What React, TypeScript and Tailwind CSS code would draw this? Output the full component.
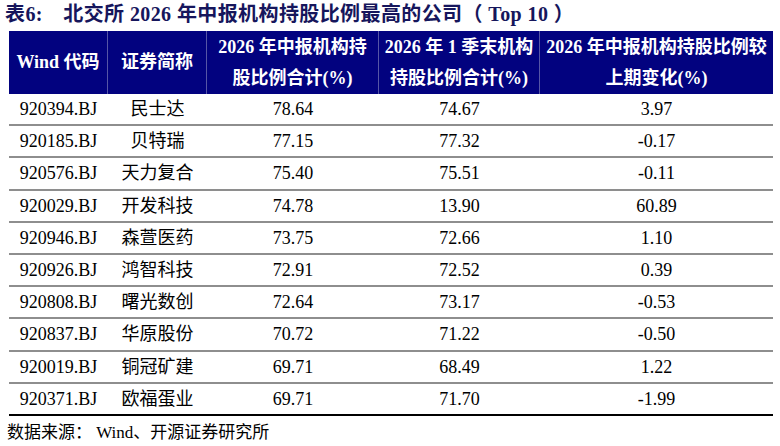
import React from "react";

const rows = [
  ["920394.BJ", "民士达", "78.64", "74.67", "3.97"],
  ["920185.BJ", "贝特瑞", "77.15", "77.32", "-0.17"],
  ["920576.BJ", "天力复合", "75.40", "75.51", "-0.11"],
  ["920029.BJ", "开发科技", "74.78", "13.90", "60.89"],
  ["920946.BJ", "森萱医药", "73.75", "72.66", "1.10"],
  ["920926.BJ", "鸿智科技", "72.91", "72.52", "0.39"],
  ["920808.BJ", "曙光数创", "72.64", "73.17", "-0.53"],
  ["920837.BJ", "华原股份", "70.72", "71.22", "-0.50"],
  ["920019.BJ", "铜冠矿建", "69.71", "68.49", "1.22"],
  ["920371.BJ", "欧福蛋业", "69.71", "71.70", "-1.99"],
];

const widths = ["w-[99px]", "w-[99px]", "w-[172px]", "w-[161px]", "w-[233px]"];

export default function App() {
  return (
    <div
      className="w-[780px] h-[446px] bg-white overflow-hidden text-black"
      style={{ fontFamily: '"Liberation Serif", "Noto Sans CJK SC", serif' }}
    >
      <div className="h-[31px] pl-[5px] text-[20px] font-bold leading-[28px] tracking-[0.4px] text-[#16165c] whitespace-nowrap">
        表6:{"\u3000"}北交所 2026 年中报机构持股比例最高的公司（ Top 10 ）
      </div>
      <div className="ml-[9px] w-[764px]">
        <div className="flex h-[63px] bg-[#02027f] text-white font-bold text-[18px]">
          <div className={`${widths[0]} flex items-center justify-center border-r border-[#5656a6]`}>
            Wind 代码
          </div>
          <div className={`${widths[1]} flex items-center justify-center border-r border-[#5656a6]`}>
            证券简称
          </div>
          <div className={`${widths[2]} flex flex-col items-center justify-center leading-[31px] border-r border-[#5656a6]`}>
            <div>2026 年中报机构持</div>
            <div>股比例合计(%)</div>
          </div>
          <div className={`${widths[3]} flex flex-col items-center justify-center leading-[31px] border-r border-[#5656a6]`}>
            <div>2026 年 1 季末机构</div>
            <div>持股比例合计(%)</div>
          </div>
          <div className={`${widths[4]} flex flex-col items-center justify-center leading-[31px]`}>
            <div>2026 年中报机构持股比例较</div>
            <div>上期变化(%)</div>
          </div>
        </div>
        {rows.map((r, i) => (
          <div
            key={r[0]}
            className={`flex h-[32.2px] text-[18px] items-center ${
              i === rows.length - 1 ? "border-b-2 border-black" : "border-b-2 border-[#8e8e8e]"
            }`}
          >
            {r.map((c, j) => (
              <div key={j} className={`${widths[j]} text-center leading-[30px]`}>
                {c}
              </div>
            ))}
          </div>
        ))}
      </div>
      <div className="pl-[7px] pt-[3px] text-[17px] leading-[28px] whitespace-nowrap">
        数据来源： Wind、开源证券研究所
      </div>
    </div>
  );
}
